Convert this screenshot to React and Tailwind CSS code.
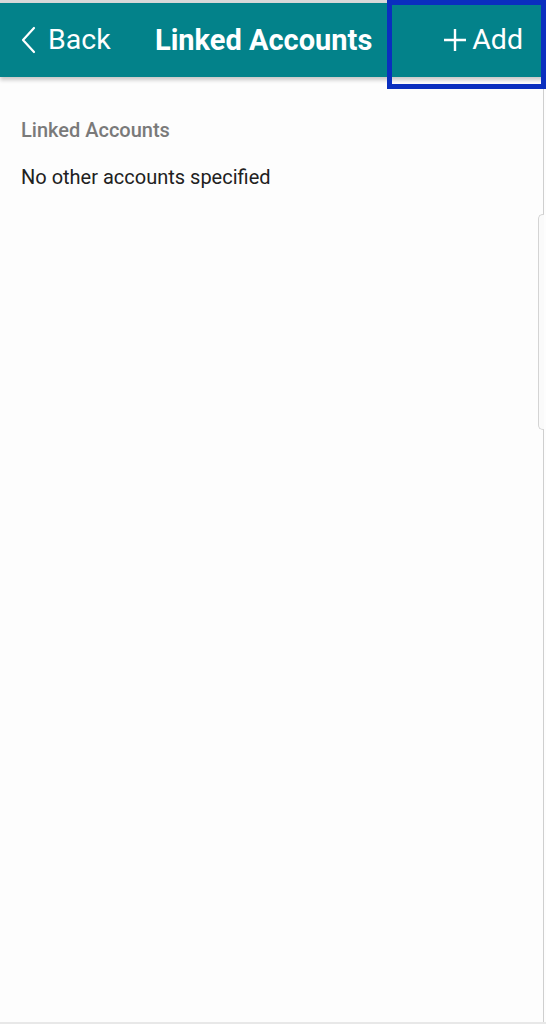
import React from 'react';

const App = () => {
    return (
        <div className="relative w-[546px] h-[1024px] bg-[#fdfdfd] overflow-hidden" style={{ fontFamily: 'Roboto, "Noto Sans", sans-serif' }}>
            {/* top strip */}
            <div className="h-[3px] bg-[#d9d9d9]" />
            {/* Header */}
            <div className="relative h-[74px] bg-[#03828a] flex items-center text-white shadow-[0_3px_4px_rgba(0,0,0,0.22)] z-10">
                <div className="flex items-center pl-[20px] w-[150px]">
                    <svg width="18" height="28" viewBox="0 0 18 28" className="mr-[10px]">
                        <path d="M14 2 L3 14 L14 26" fill="none" stroke="white" strokeWidth="2.2" strokeLinecap="round" strokeLinejoin="round" />
                    </svg>
                    <span className="text-[28.5px] leading-none">Back</span>
                </div>
                <div className="text-[29px] font-bold leading-none ml-[5px]">Linked Accounts</div>
                <div className="flex-1 flex items-center justify-end pr-[23px]">
                    <svg width="24" height="24" viewBox="0 0 24 24" className="mr-[5px]">
                        <path d="M12 1 V23 M1 12 H23" fill="none" stroke="white" strokeWidth="2.4" />
                    </svg>
                    <span className="text-[28.5px] leading-none">Add</span>
                </div>
            </div>

            {/* Content */}
            <div className="px-[21px] pt-[43px]">
                <div className="text-[20px] font-medium text-[#7a7a7a] leading-none">Linked Accounts</div>
                <div className="text-[20px] text-[#212121] leading-none mt-[27px]">No other accounts specified</div>
            </div>

            {/* highlight box around Add */}
            <div className="absolute left-[387px] top-0 w-[159px] h-[89px] border-[5px] border-[#0a2fbf] z-20" />

            {/* right edge line and scroll handle */}
            <div className="absolute right-[2px] top-[80px] bottom-0 w-[1px] bg-[#cfcfcf]" />
            <div className="absolute right-[2px] top-[214px] h-[216px] w-[6px] rounded-l-[5px] border border-r-0 border-[#d4d4d4] bg-[#fafafa]" />
            {/* bottom line */}
            <div className="absolute left-0 right-0 bottom-0 h-[2px] bg-[#e8e8e8]" />
        </div>
    );
};

export default App;
